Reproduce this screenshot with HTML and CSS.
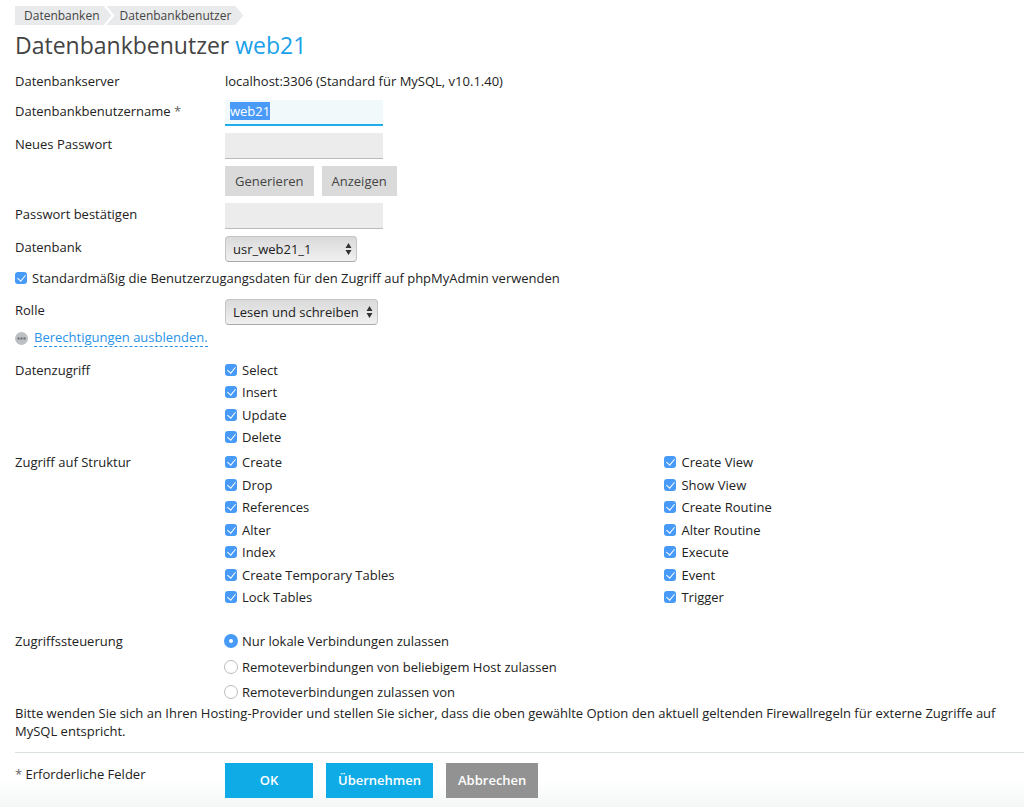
FILE: index.html
```
<!DOCTYPE html>
<html lang="de">
<head>
<meta charset="utf-8">
<meta name="viewport" content="width=device-width, initial-scale=1">
<title>Datenbankbenutzer web21</title>
<link rel="stylesheet" href="styles.css">
</head>
<body>
<main class="page">
  <nav class="breadcrumb" aria-label="Pfad">
    <a class="crumb crumb-first" href="#">Datenbanken</a>
    <a class="crumb" href="#">Datenbankbenutzer</a>
  </nav>
  <h1 class="title">Datenbankbenutzer <span class="title-name">web21</span></h1>

  <form class="form">
    <div class="row row-text">
      <span>Datenbankserver</span>
      <span>localhost:3306 (Standard für MySQL, v10.1.40)</span>
    </div>
    <div class="row">
      <label class="label" for="username">Datenbankbenutzername <span class="star">*</span></label>
      <input class="input input-active" id="username" type="text" value="web21">
    </div>
    <div class="row">
      <label class="label" for="password">Neues Passwort</label>
      <div class="stack">
        <input class="input" id="password" type="password">
        <div class="tools">
          <button class="tool" type="button">Generieren</button>
          <button class="tool" type="button">Anzeigen</button>
        </div>
      </div>
    </div>
    <div class="row">
      <label class="label" for="confirm">Passwort bestätigen</label>
      <input class="input" id="confirm" type="password">
    </div>
    <div class="row">
      <label class="label" for="database">Datenbank</label>
      <div class="select-wrap select-small">
        <select class="select" id="database"><option>usr_web21_1</option></select>
        <svg class="arrows" viewBox="0 0 7 12" aria-hidden="true"><path d="M3.5 0 6.500 5h-6zM3.5 12 .5 7h6z"/></svg>
      </div>
    </div>
    <label class="option"><input class="check" type="checkbox" checked>Standardmäßig die Benutzerzugangsdaten für den Zugriff auf phpMyAdmin verwenden</label>
    <div class="row row-role">
      <label class="label" for="role">Rolle</label>
      <div class="select-wrap">
        <select class="select" id="role"><option>Lesen und schreiben</option></select>
        <svg class="arrows" viewBox="0 0 7 12" aria-hidden="true"><path d="M3.5 0 6.500 5h-6zM3.5 12 .5 7h6z"/></svg>
      </div>
    </div>
    <div class="toggle">
      <svg class="toggle-icon" viewBox="0 0 13 13" aria-hidden="true"><circle cx="6.500" cy="6.500" r="6.500" fill="#bcc0c4"/><path d="M2.500 6.500h8" stroke="#666a6f" stroke-width="2" stroke-dasharray="2 1"/></svg>
      <a class="toggle-link" href="#">Berechtigungen ausblenden.</a>
    </div>

    <div class="row row-group" role="group" aria-labelledby="g-data">
      <span id="g-data">Datenzugriff</span>
      <div class="list list-short">
        <label class="option"><input class="check" type="checkbox" checked>Select</label>
        <label class="option"><input class="check" type="checkbox" checked>Insert</label>
        <label class="option"><input class="check" type="checkbox" checked>Update</label>
        <label class="option"><input class="check" type="checkbox" checked>Delete</label>
      </div>
    </div>
    <div class="row row-structure" role="group" aria-labelledby="g-structure">
      <span id="g-structure">Zugriff auf Struktur</span>
      <div class="columns">
        <div class="list list-long">
          <label class="option"><input class="check" type="checkbox" checked>Create</label>
          <label class="option"><input class="check" type="checkbox" checked>Drop</label>
          <label class="option"><input class="check" type="checkbox" checked>References</label>
          <label class="option"><input class="check" type="checkbox" checked>Alter</label>
          <label class="option"><input class="check" type="checkbox" checked>Index</label>
          <label class="option"><input class="check" type="checkbox" checked>Create Temporary Tables</label>
          <label class="option"><input class="check" type="checkbox" checked>Lock Tables</label>
        </div>
        <div class="list list-long">
          <label class="option"><input class="check" type="checkbox" checked>Create View</label>
          <label class="option"><input class="check" type="checkbox" checked>Show View</label>
          <label class="option"><input class="check" type="checkbox" checked>Create Routine</label>
          <label class="option"><input class="check" type="checkbox" checked>Alter Routine</label>
          <label class="option"><input class="check" type="checkbox" checked>Execute</label>
          <label class="option"><input class="check" type="checkbox" checked>Event</label>
          <label class="option"><input class="check" type="checkbox" checked>Trigger</label>
        </div>
      </div>
    </div>
    <div class="row row-access" role="radiogroup" aria-labelledby="g-access">
      <span id="g-access">Zugriffssteuerung</span>
      <div class="list list-radio">
        <label class="option"><input class="radio" type="radio" name="access" checked>Nur lokale Verbindungen zulassen</label>
        <label class="option"><input class="radio" type="radio" name="access">Remoteverbindungen von beliebigem Host zulassen</label>
        <label class="option"><input class="radio" type="radio" name="access">Remoteverbindungen zulassen von</label>
      </div>
    </div>
    <p class="note">Bitte wenden Sie sich an Ihren Hosting-Provider und stellen Sie sicher, dass die oben gewählte Option den aktuell geltenden Firewallregeln für externe Zugriffe auf MySQL entspricht.</p>

    <div class="row footer">
      <span class="required"><span class="star">*</span> Erforderliche Felder</span>
      <div class="actions">
        <button class="action action-ok" type="submit">OK</button>
        <button class="action" type="button">Übernehmen</button>
        <button class="action action-cancel" type="button">Abbrechen</button>
      </div>
    </div>
  </form>
</main>
<script src="script.js"></script>
</body>
</html>
```
FILE: styles.css
```
* {
  box-sizing: border-box;
}

body {
  margin: 0;
  background: #fff;
  color: #222;
  font-family: "Open Sans", "Noto Sans", sans-serif;
  font-size: 13px;
  line-height: 18px;
}

button,
input,
select {
  margin: 0;
  font: inherit;
  color: inherit;
}

.page {
  min-height: 100vh;
  padding: 6px 0 8px 15px;
  background: linear-gradient(to top, #f5f7f7, #fff 28px);
}

.breadcrumb {
  display: flex;
  font-size: 12px;
}

.crumb {
  padding: 0 12px 0 13px;
  line-height: 19px;
  background: #e9eaeb;
  color: #444;
  text-decoration: none;
  clip-path: polygon(0 0, calc(100% - 8px) 0, 100% 50%, calc(100% - 8px) 100%, 0 100%, 8px 50%);
}

.crumb + .crumb {
  margin-left: -5px;
}

.crumb-first {
  padding-left: 9px;
  clip-path: polygon(0 0, calc(100% - 8px) 0, 100% 50%, calc(100% - 8px) 100%, 0 100%);
}

.title {
  margin: 4px 0 11px;
  font-size: 23px;
  line-height: 32px;
  font-weight: 400;
  color: #444;
}

.title-name {
  color: #1ba1ea;
}

.form {
  display: flex;
  flex-direction: column;
  gap: 7px;
}

.row {
  display: grid;
  grid-template-columns: 210px 1fr;
  align-items: start;
}

.row-text {
  padding-bottom: 3px;
}

.label {
  padding-top: 2px;
}

.star {
  color: #666;
}

.input {
  width: 158px;
  height: 26px;
  padding: 0 5px;
  border: 0;
  border-bottom: 1px solid #bbb;
  border-radius: 0;
  background: #ececec;
}

.input:focus {
  outline: 0;
}

.input-active {
  padding-bottom: 2px;
  border-bottom: 2px solid #1eaeec;
  background: #f2f9fb;
}

.input::selection {
  background: #4a9bf8;
  color: #fff;
}

.stack {
  display: flex;
  flex-direction: column;
  gap: 7px;
}

.tools {
  display: flex;
  gap: 8px;
}

.tool {
  height: 30px;
  padding: 0 10px 1px;
  border: 0;
  background: #dadada;
  color: #444;
}

.select-wrap {
  position: relative;
  width: 153px;
}

.select-small {
  width: 132px;
}

.select {
  display: block;
  width: 100%;
  height: 26px;
  padding: 0 16px 1px 7px;
  appearance: none;
  border: 1px solid #c4c4c4;
  border-bottom-color: #aaa;
  border-radius: 4px;
  background: linear-gradient(#dadada, #f0f0f0);
}

.arrows {
  position: absolute;
  top: 7px;
  right: 5px;
  width: 7px;
  height: 12px;
  fill: #333;
  pointer-events: none;
}

.option {
  display: flex;
  align-items: center;
  gap: 5px;
}

.check,
.radio {
  display: grid;
  place-items: center;
  flex: none;
  appearance: none;
  width: 12px;
  height: 12px;
}

.check {
  border-radius: 3px;
  background: #479af8;
}

.check:checked::after {
  content: "";
  width: 4px;
  height: 7px;
  margin-bottom: 2px;
  border: solid #fff;
  border-width: 0 1px 1px 0;
  transform: rotate(40deg);
}

.radio {
  width: 14px;
  height: 14px;
  margin: 0 -1px;
  border: 1px solid #bbb;
  border-radius: 50%;
  background: #fff;
}

.radio:checked {
  border: 5px solid #479af8;
}

.row-role {
  margin-top: 5px;
}

.toggle {
  display: flex;
  align-items: center;
  gap: 6px;
  margin-top: -3px;
}

.toggle-icon {
  width: 13px;
  height: 13px;
}

.toggle-link {
  border-bottom: 1px dashed #2a93e8;
  color: #2a93e8;
  line-height: 17px;
  text-decoration: none;
}

.row-group {
  margin-top: 7px;
}

.columns {
  display: grid;
  grid-template-columns: 11fr 9fr;
}

.list {
  display: flex;
  flex-direction: column;
  justify-content: space-between;
}

.list-short {
  min-height: 85px;
}

.list-long {
  min-height: 153px;
}

.list-radio {
  min-height: 69px;
}

.row-access {
  margin-top: 19px;
}

.note {
  margin: -4px 0 5px;
  padding-right: 4px;
}

.footer {
  padding-top: 10px;
  border-top: 1px solid #dadfe1;
}

.required {
  padding-top: 2px;
}

.actions {
  display: flex;
  gap: 13px;
}

.action {
  height: 35px;
  padding: 0 12px 1px;
  border: 0;
  background: #0fabe6;
  color: #fff;
  font-weight: 600;
}

.action-ok {
  min-width: 88px;
}

.action-cancel {
  background: #929292;
}
```
FILE: script.js
```
const username = document.getElementById("username");
username.focus();
username.select();
```
